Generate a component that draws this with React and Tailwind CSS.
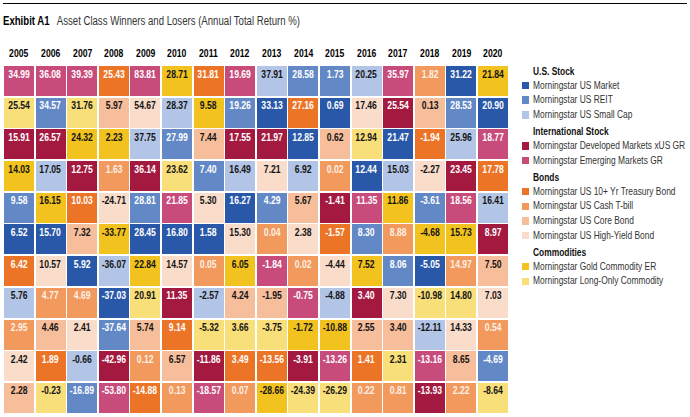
const COLORS = {
  M: { bg: 'bg-[#2a58a8]', fg: 'text-white' },
  R: { bg: 'bg-[#6388c6]', fg: 'text-white' },
  S: { bg: 'bg-[#b3c5e6]', fg: 'text-[#141414]' },
  D: { bg: 'bg-[#a3193f]', fg: 'text-white' },
  E: { bg: 'bg-[#c74b7b]', fg: 'text-white' },
  T: { bg: 'bg-[#ec7427]', fg: 'text-white' },
  C: { bg: 'bg-[#f2995d]', fg: 'text-[#fdf0e6]' },
  B: { bg: 'bg-[#f6be9b]', fg: 'text-[#141414]' },
  H: { bg: 'bg-[#fadccb]', fg: 'text-[#141414]' },
  G: { bg: 'bg-[#f2c31f]', fg: 'text-[#141414]' },
  L: { bg: 'bg-[#f8df7a]', fg: 'text-[#141414]' },
};

const YEARS = [2005, 2006, 2007, 2008, 2009, 2010, 2011, 2012, 2013, 2014, 2015, 2016, 2017, 2018, 2019, 2020];

// each row: "value:code" per year, best to worst
const ROWS = [
  '34.99:E 36.08:E 39.39:E 25.43:T 83.81:E 28.71:G 31.81:T 19.69:E 37.91:S 28.58:R 1.73:R 20.25:S 35.97:E 1.82:C 31.22:M 21.84:G',
  '25.54:L 34.57:R 31.76:L 5.97:B 54.67:H 28.37:S 9.58:G 19.26:R 33.13:M 27.16:T 0.69:M 17.46:H 25.54:D 0.13:B 28.53:R 20.90:M',
  '15.91:D 26.57:D 24.32:G 2.23:G 37.75:S 27.99:R 7.44:B 17.55:D 21.97:D 12.85:M 0.62:B 12.94:L 21.47:M -1.94:T 25.96:S 18.77:E',
  '14.03:G 17.05:S 12.75:D 1.63:C 36.14:D 23.62:L 7.40:R 16.49:S 7.21:H 6.92:S 0.02:C 12.44:M 15.03:S -2.27:H 23.45:D 17.78:T',
  '9.58:R 16.15:G 10.03:T -24.71:H 28.81:R 21.85:E 5.30:H 16.27:M 4.29:R 5.67:B -1.41:D 11.35:E 11.86:G -3.61:R 18.56:E 16.41:S',
  '6.52:M 15.70:M 7.32:B -33.77:G 28.45:M 16.80:M 1.58:M 15.30:H 0.04:C 2.38:H -1.57:T 8.30:R 8.88:C -4.68:G 15.73:G 8.97:D',
  '6.42:T 10.57:H 5.92:M -36.07:S 22.84:G 14.57:H 0.05:C 6.05:G -1.84:E 0.02:C -4.44:H 7.52:G 8.06:R -5.05:M 14.97:C 7.50:B',
  '5.76:S 4.77:C 4.69:C -37.03:M 20.91:L 11.35:D -2.57:S 4.24:B -1.95:B -0.75:E -4.88:S 3.40:D 7.30:H -10.98:L 14.80:L 7.03:H',
  '2.95:C 4.46:B 2.41:H -37.64:R 5.74:B 9.14:T -5.32:L 3.66:L -3.75:L -1.72:G -10.88:G 2.55:B 3.40:B -12.11:S 14.33:H 0.54:C',
  '2.42:H 1.89:T -0.66:S -42.96:D 0.12:C 6.57:B -11.86:D 3.49:T -13.56:T -3.91:D -13.26:E 1.41:T 2.31:L -13.16:E 8.65:B -4.69:R',
  '2.28:B -0.23:L -16.89:R -53.80:E -14.88:T 0.13:C -18.57:E 0.07:C -28.66:G -24.39:L -26.29:L 0.22:C 0.81:C -13.93:D 2.22:C -8.64:L',
].map(r => r.split(' ').map(c => { const [v, k] = c.split(':'); return { v, k }; }));

const LEGEND = [
  { title: 'U.S. Stock', items: [['M', 'Morningstar US Market'], ['R', 'Morningstar US REIT'], ['S', 'Morningstar US Small Cap']] },
  { title: 'International Stock', items: [['D', 'Morningstar Developed Markets xUS GR'], ['E', 'Morningstar Emerging Markets GR']] },
  { title: 'Bonds', items: [['T', 'Morningstar US 10+ Yr Treasury Bond'], ['C', 'Morningstar US Cash T-bill'], ['B', 'Morningstar US Core Bond'], ['H', 'Morningstar US High-Yield Bond']] },
  { title: 'Commodities', items: [['G', 'Morningstar Gold Commodity ER'], ['L', 'Morningstar Long-Only Commodity']] },
];

const font = "font-['Liberation_Sans',Arial,sans-serif]";

export default function App() {
  return (
    <div className={`w-[690px] h-[417px] bg-white overflow-hidden ${font} text-[#1a1a1a]`}>
      <div className="mx-[3px] mt-[3px] border-t-[1.5px] border-black pt-[3.5px] h-[19.5px] whitespace-nowrap">
        <span className="inline-block origin-left scale-x-[0.8] text-[12px] leading-[14px]">
          <span className="font-bold text-black">Exhibit A1</span>
          <span className="ml-[9px] text-[#333]">Asset Class Winners and Losers (Annual Total Return %)</span>
        </span>
      </div>

      <div className="flex mt-[23.5px]">
        <div className="ml-[4px] w-[505px]">
          <div className="grid grid-cols-[repeat(16,30px)] gap-x-[1.6px] h-[14px] items-center">
            {YEARS.map(y => (
              <div key={y} className="text-center text-[10.5px] font-bold leading-none text-black">
                <span className="inline-block scale-x-[0.82]">{y}</span>
              </div>
            ))}
          </div>
          <div className="grid grid-cols-[repeat(16,30px)] grid-rows-[repeat(11,30px)] gap-x-[1.6px] gap-y-[1.7px] mt-[6px]">
            {ROWS.flatMap((row, i) =>
              row.map((c, j) => (
                <div key={`${i}-${j}`} className={`${COLORS[c.k].bg} ${COLORS[c.k].fg} text-center text-[10.5px] font-bold leading-none pt-[2.5px] whitespace-nowrap`}>
                  <span className="inline-block scale-x-[0.82]">{c.v}</span>
                </div>
              ))
            )}
          </div>
        </div>

        <div className="ml-[14px] mt-[17.7px] flex flex-col">
          {LEGEND.map((g, gi) => (
            <div key={g.title} className={gi > 0 ? 'mt-[2px]' : ''}>
              <div className="h-[14.6px] leading-[14.6px] text-[10.5px] font-bold text-[#111] pl-[11px] whitespace-nowrap">
                <span className="inline-block origin-left scale-x-[0.8]">{g.title}</span>
              </div>
              {g.items.map(([k, label]) => (
                <div key={label} className="flex items-center h-[14.6px] text-[10.5px] text-[#333]">
                  <span className={`w-[7.5px] h-[7.5px] mr-[3.5px] shrink-0 ${COLORS[k].bg}`} />
                  <span className="inline-block origin-left scale-x-[0.8] whitespace-nowrap">{label}</span>
                </div>
              ))}
            </div>
          ))}
        </div>
      </div>
    </div>
  );
}
